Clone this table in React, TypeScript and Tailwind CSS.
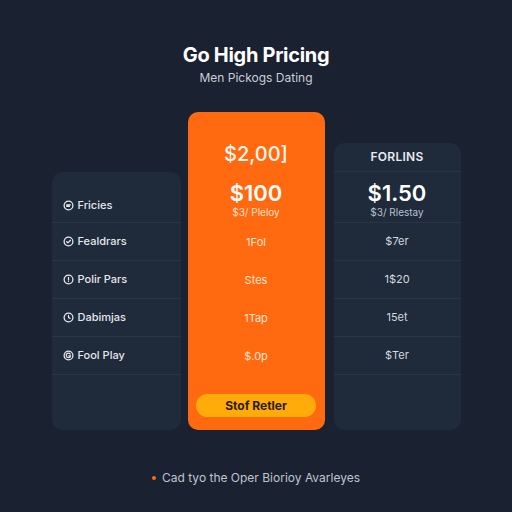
import React from "react";

// ── Small feature icons for the left column ────────────────────────────────
function RowIcon({ kind }: { kind: number }) {
  return (
    <svg width="11" height="11" viewBox="0 0 12 12" fill="none" stroke="#e5e7eb" strokeWidth="1.4" strokeLinecap="round" strokeLinejoin="round">
      <circle cx="6" cy="6" r="4.8" />
      {kind === 0 && <path d="M4 5.2h4M4 6.8h3" />}
      {kind === 1 && <path d="M3.9 6.1l1.5 1.4 2.7-2.8" />}
      {kind === 2 && <path d="M6 3.6v3M6 8.2v.1" />}
      {kind === 3 && <path d="M6 3.8V6l1.6 1" />}
      {kind === 4 && <path d="M7.9 4.4A2.4 2.4 0 1 0 8.3 6.4H6.3" />}
    </svg>
  );
}

const FEATURES = ["Fricies", "Fealdrars", "Polir Pars", "Dabimjas", "Fool Play"];
const MID_ROWS = ["1Fol", "Stes", "1Tap", "$.0p"];
const RIGHT_ROWS = ["$7er", "1$20", "15et", "$Ter"];

export default function App() {
  return (
    <div
      className="w-[512px] h-[512px] bg-[#1a2130] flex flex-col items-center overflow-hidden"
      style={{ fontFamily: "Inter, 'Liberation Sans', sans-serif" }}
    >
      {/* Heading */}
      <h1 className="mt-[41px] text-[20px] leading-[28px] font-bold text-white tracking-[-0.3px]">
        Go High Pricing
      </h1>
      <p className="text-[12px] leading-[18px] text-[#c9ced8]">Men Pickogs Dating</p>

      {/* Plans */}
      <div className="mt-[25px] flex items-end">
        {/* Features column */}
        <div className="w-[129px] h-[258px] rounded-[10px] bg-[#1f2a3b] pt-[15px]">
          {FEATURES.map((f, i) => (
            <div
              key={f}
              className={`${i === 0 ? "h-[36px] pt-[2px]" : "h-[38px]"} flex items-center gap-[4px] pl-[11px] border-b border-white/5`}
            >
              <RowIcon kind={i} />
              <span className="text-[11px] font-medium text-[#e5e7eb]">{f}</span>
            </div>
          ))}
        </div>

        {/* Highlighted plan */}
        <div className="ml-[7px] w-[137px] h-[318px] rounded-[10px] bg-[#ff6a10] flex flex-col items-center">
          <div className="h-[60px] pt-[30px] text-[20px] leading-[24px] font-medium text-[#fff6ee]">$2,00]</div>
          <div className="h-[51px] pt-[8px] flex flex-col items-center">
            <span className="text-[22px] leading-[26px] font-semibold text-white">$100</span>
            <span className="text-[10px] leading-[12px] text-[#ffe0cc]">$3/ Pleloy</span>
          </div>
          {MID_ROWS.map((r) => (
            <div key={r} className="h-[38px] flex items-center text-[11px] text-[#ffe4d2]">
              {r}
            </div>
          ))}
          <button className="mt-[19px] w-[120px] h-[23px] rounded-full bg-[#ffab0a] text-[12px] font-bold text-[#2a1a0c]">
            Stof Retler
          </button>
        </div>

        {/* Secondary plan */}
        <div className="ml-[9px] w-[127px] h-[287px] rounded-[10px] bg-[#1f2a3b] flex flex-col">
          <div className="h-[29px] flex items-center justify-center border-b border-white/5 text-[12px] font-semibold tracking-[0.3px] text-[#e8ebf0]">
            FORLINS
          </div>
          <div className="h-[51px] pt-[8px] flex flex-col items-center border-b border-white/5">
            <span className="text-[22px] leading-[26px] font-semibold text-white">$1.50</span>
            <span className="text-[10px] leading-[12px] text-[#b9c0cc]">$3/ Rlestay</span>
          </div>
          {RIGHT_ROWS.map((r) => (
            <div key={r} className="h-[38px] flex items-center justify-center border-b border-white/5 text-[11px] text-[#d4d8df]">
              {r}
            </div>
          ))}
        </div>
      </div>

      {/* Footer note */}
      <div className="mt-[39px] flex items-center gap-[6px]">
        <span className="w-[4px] h-[4px] rounded-full bg-[#ff6a10]" />
        <span className="text-[12px] leading-[18px] text-[#bfc5cf]">Cad tyo the Oper Biorioy Avarleyes</span>
      </div>
    </div>
  );
}
